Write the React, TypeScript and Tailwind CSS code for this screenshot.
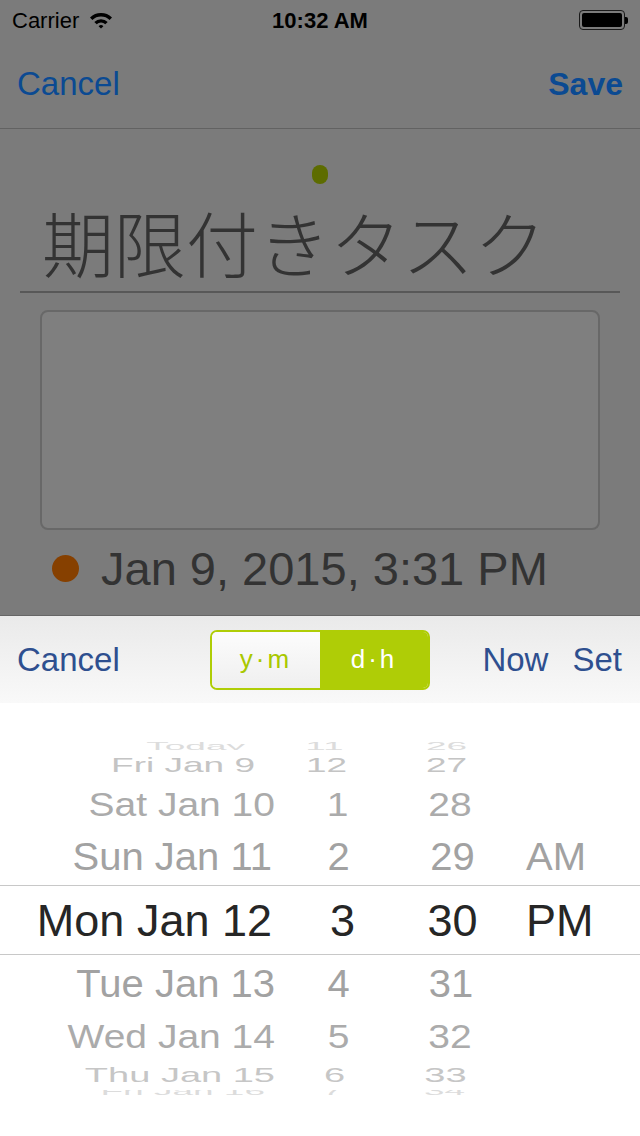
const sans = "font-['Liberation_Sans','Noto_Sans_CJK_JP',sans-serif]";

type Row = {
  date: string;
  hour: string;
  min: string;
  ampm: string;
  h: string;
  text: string;
  color: string;
  scale: string;
  dateCls: string;
  hourCls: string;
  minCls: string;
};

const rows: Row[] = [
  { date: "Today", hour: "11", min: "26", ampm: "", h: "h-[20px]", text: "text-[37px]", color: "text-[#dcdcdc]", scale: "scale-y-[0.3] translate-y-[6px]", dateCls: "pr-[30px]", hourCls: "pr-[36px]", minCls: "pr-[12px]" },
  { date: "Fri Jan 9", hour: "12", min: "27", ampm: "", h: "h-[30px]", text: "text-[37px]", color: "text-[#c4c4c4]", scale: "scale-y-[0.55]", dateCls: "pr-[20px]", hourCls: "pr-[32px]", minCls: "pr-[12px]" },
  { date: "Sat Jan 10", hour: "1", min: "28", ampm: "", h: "h-[48px]", text: "text-[39px]", color: "text-[#ababab]", scale: "scale-y-[0.85]", dateCls: "", hourCls: "pr-[10px]", minCls: "pr-[5px]" },
  { date: "Sun Jan 11", hour: "2", min: "29", ampm: "AM", h: "h-[57px]", text: "text-[40px]", color: "text-[#a2a2a2]", scale: "scale-y-[0.95]", dateCls: "pr-[3px]", hourCls: "pr-[8px]", minCls: "" },
];

const rowsBelow: Row[] = [
  { date: "Tue Jan 13", hour: "4", min: "31", ampm: "", h: "h-[58px]", text: "text-[40px]", color: "text-[#a2a2a2]", scale: "scale-y-[0.95]", dateCls: "", hourCls: "pr-[8px]", minCls: "pr-[3px]" },
  { date: "Wed Jan 14", hour: "5", min: "32", ampm: "", h: "h-[47px]", text: "text-[39px]", color: "text-[#ababab]", scale: "scale-y-[0.85]", dateCls: "", hourCls: "pr-[8px]", minCls: "pr-[5px]" },
  { date: "Thu Jan 15", hour: "6", min: "33", ampm: "", h: "h-[30px]", text: "text-[38px]", color: "text-[#c6c6c6]", scale: "scale-y-[0.55]", dateCls: "", hourCls: "pr-[16px]", minCls: "pr-[14px]" },
  { date: "Fri Jan 16", hour: "7", min: "34", ampm: "", h: "h-[10px]", text: "text-[37px]", color: "text-[#dcdcdc]", scale: "scale-y-[0.3] -translate-y-[4px]", dateCls: "pr-[10px]", hourCls: "pr-[20px]", minCls: "pr-[16px]" },
];

function PickerRow({ r }: { r: Row }) {
  return (
    <div className={`${r.h} flex items-center overflow-hidden ${r.color} ${r.text}`}>
      <div className={`flex w-full items-center leading-none ${r.scale}`}>
        <div className={`w-[275px] text-right ${r.dateCls}`}>{r.date}</div>
        <div className={`w-[135px] text-center ${r.hourCls}`}>{r.hour}</div>
        <div className={`w-[85px] text-center ${r.minCls}`}>{r.min}</div>
        <div className="pl-[31px]">{r.ampm}</div>
      </div>
    </div>
  );
}

function Wifi() {
  return (
    <svg width="24" height="18" viewBox="0 0 24 18">
      <path d="M1 6.5 A16 16 0 0 1 23 6.5 L20.6 9 A12.6 12.6 0 0 0 3.4 9 Z" fill="#000" />
      <path d="M5.3 10.9 A9.5 9.5 0 0 1 18.7 10.9 L16.3 13.3 A6.2 6.2 0 0 0 7.7 13.3 Z" fill="#000" />
      <path d="M9.6 15.2 A3.4 3.4 0 0 1 14.4 15.2 L12 17.6 Z" fill="#000" />
    </svg>
  );
}

function Battery() {
  return (
    <div className="flex items-center">
      <div className="w-[46px] h-[20px] rounded-[4px] border border-[#1a1a1a] p-[2px]">
        <div className="w-full h-full rounded-[2px] bg-black" />
      </div>
      <div className="w-[3px] h-[7px] rounded-r-[2px] bg-black" />
    </div>
  );
}

export default function App() {
  return (
    <div className={`w-[640px] h-[1136px] overflow-hidden bg-white ${sans}`}>
      {/* dimmed editor */}
      <div className="h-[615px] bg-[#7b7b7b] flex flex-col">
        <div className="h-[40px] flex items-center justify-between px-[12px] text-[22px] text-black">
          <div className="flex items-center gap-[10px] w-[200px]">
            <span>Carrier</span>
            <Wifi />
          </div>
          <div className="font-semibold">10:32 AM</div>
          <div className="w-[200px] flex justify-end">
            <Battery />
          </div>
        </div>

        <div className="h-[89px] flex items-center justify-between px-[17px] border-b border-[#626262] text-[33px] text-[#0b4a92]">
          <span>Cancel</span>
          <span className="font-bold text-[32px]">Save</span>
        </div>

        <div className="flex flex-col items-center pt-[36px]">
          <div className="w-[16px] h-[19px] rounded-full bg-[#5d6c00]" />
        </div>

        <div className="mx-[20px] mt-[9px] h-[100px] pt-[10px] flex items-center border-b-2 border-[#585858]">
          <span className="pl-[22px] text-[72px] leading-none font-light text-[#333]">期限付きタスク</span>
        </div>

        <div className="mx-[40px] mt-[17px] h-[220px] rounded-[8px] border-2 border-[#686868] bg-[#7f7f7f]" />

        <div className="mt-[16px] h-[44px] flex items-center pl-[52px] gap-[22px]">
          <div className="w-[27px] h-[27px] rounded-full bg-[#864000]" />
          <span className="text-[47px] leading-none text-[#333]">Jan 9, 2015, 3:31 PM</span>
        </div>
      </div>

      {/* toolbar */}
      <div className="h-[88px] border-t border-[#666] bg-linear-to-b from-[#eaeaea] to-[#f9f9f9] grid grid-cols-[1fr_220px_1fr] items-center text-[33px] text-[#2e4f8f]">
        <div className="pl-[17px]">Cancel</div>
        <div className="h-[60px] flex rounded-[7px] border-2 border-[#afcd06] overflow-hidden text-[26px]">
          <div className="flex-1 flex items-center justify-center bg-linear-to-b from-[#fcfcfc] to-[#efefef] text-[#a9c800] tracking-[3px]">
            y·m
          </div>
          <div className="flex-1 flex items-center justify-center bg-[#afcd06] text-white tracking-[3px]">
            d·h
          </div>
        </div>
        <div className="flex justify-end gap-[24px] pr-[18px]">
          <span>Now</span>
          <span>Set</span>
        </div>
      </div>

      {/* picker */}
      <div className="h-[433px] bg-white pt-[27px]">
        {rows.map((r) => (
          <PickerRow key={r.date} r={r} />
        ))}
        <div className="h-[70px] flex items-center border-y border-[#c8c8c8] text-[45px] text-[#262626] leading-none">
          <div className="w-[275px] text-right pr-[3px]">Mon Jan 12</div>
          <div className="w-[135px] text-center">3</div>
          <div className="w-[85px] text-center">30</div>
          <div className="pl-[31px]">PM</div>
        </div>
        {rowsBelow.map((r) => (
          <PickerRow key={r.date} r={r} />
        ))}
      </div>
    </div>
  );
}
